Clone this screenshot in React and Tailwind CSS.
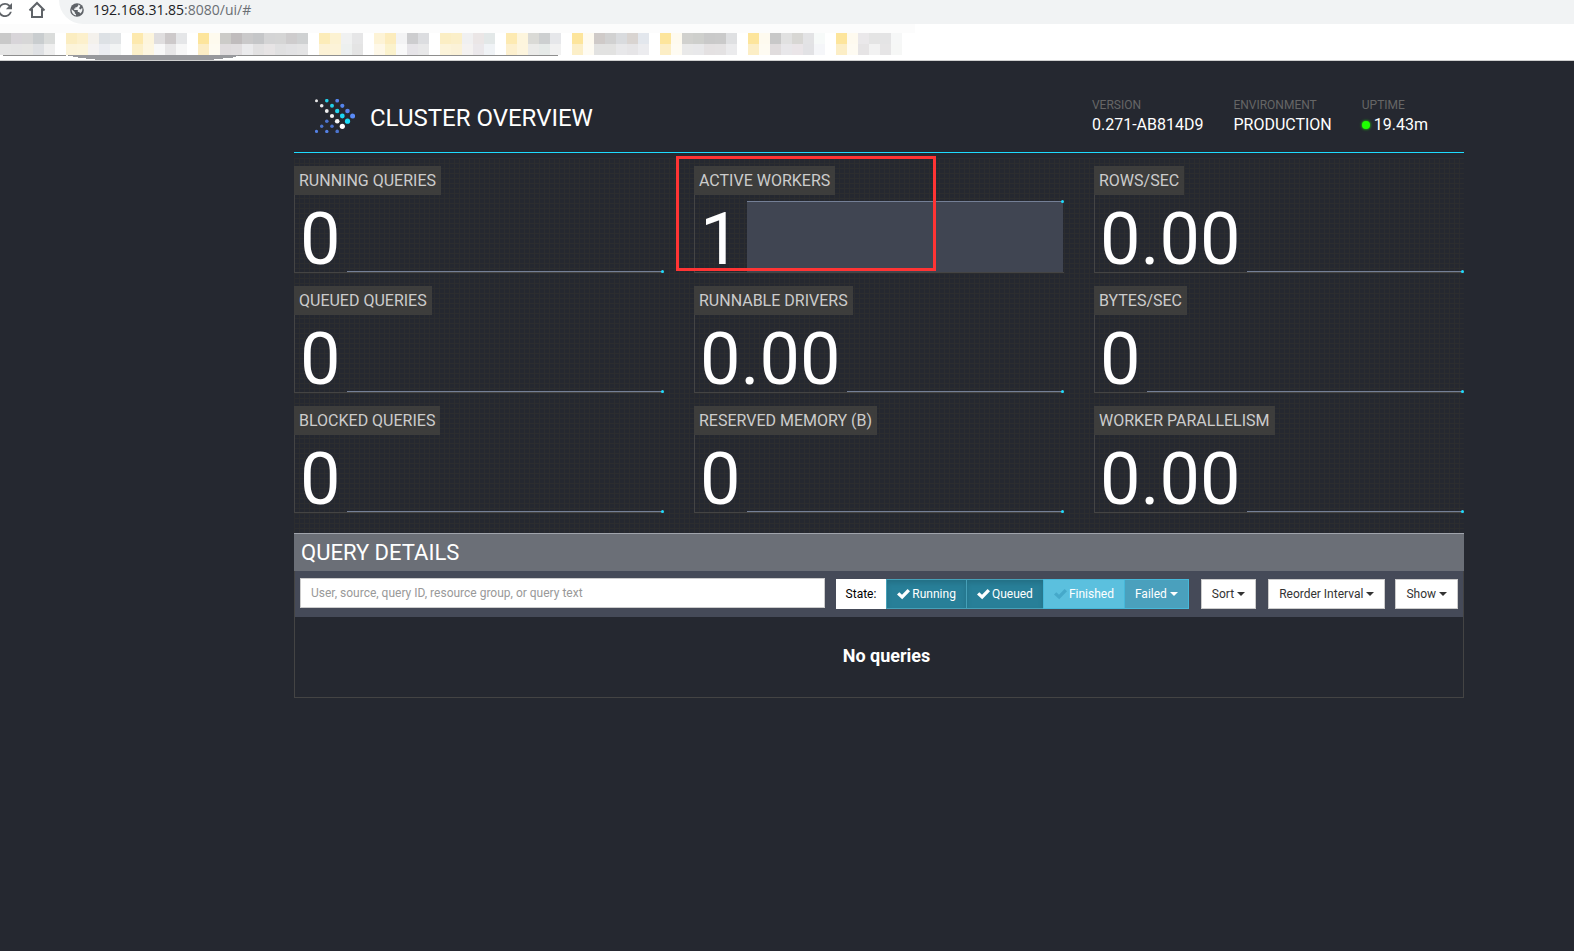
import React, { useState } from 'react';

const STATS = [
  { label: 'RUNNING QUERIES', value: '0' },
  { label: 'ACTIVE WORKERS', value: '1', full: true, highlight: true },
  { label: 'ROWS/SEC', value: '0.00' },
  { label: 'QUEUED QUERIES', value: '0' },
  { label: 'RUNNABLE DRIVERS', value: '0.00' },
  { label: 'BYTES/SEC', value: '0' },
  { label: 'BLOCKED QUERIES', value: '0' },
  { label: 'RESERVED MEMORY (B)', value: '0' },
  { label: 'WORKER PARALLELISM', value: '0.00' }
];

// Blurred bookmarks: top row and bottom row of 11px blocks
const BOOKMARKS = [
  [
    ['#c9c9c9', '#d8d5d9', '#d7d7d7', '#c9cdcf', '#dadcdb'],
    ['#e6e6e6', '#e5e5e5', '#e6e6e4', '#dfe1e4', '#efefef']
  ],
  [
    ['#fbedc1', '#fcf0cc', '#f4f1ec', '#dde1e5', '#e1e4e6'],
    ['#fcf4da', '#fcf5dc', '#f5f3f3', '#ebedf2', '#f2f4f4']
  ],
  [
    ['#fde9ae', '#fdf5dd', '#e0dedf', '#cdc9ca', '#e5e6e8'],
    ['#fcf0c9', '#fdf6e1', '#f8f8f8', '#e8e7e8', '#f7f7f7']
  ],
  [
    ['#fde59c', '#fefaee', '#cccbc8', '#c0bcbd', '#cac9ca', '#c5c6c8', '#d4d4d5', '#d5d5d5', '#cecccd', '#cfd1d2'],
    ['#fcedc5', '#fefbf1', '#e0dcde', '#e1dee0', '#ebebed', '#e2e1e2', '#e7e4e5', '#e0e0e1', '#e2e2e4', '#e4e4e5']
  ],
  [
    ['#fcecb9', '#fcf2d2', '#f0f1f1', '#e6e6e7'],
    ['#fcf2d6', '#fcf3d8', '#edf0ef', '#e4e4e4']
  ],
  [
    ['#fdf3d6', '#fcecbd', '#f3f3f4', '#cdcdcf', '#dcdde0'],
    ['#fef8e8', '#fbf2cc', '#f9f9f9', '#e6e4e8', '#e8e8e9']
  ],
  [
    ['#fbeec4', '#fbefc9', '#f0f0f1', '#ebe6e6', '#e3e8e8'],
    ['#fcf4da', '#fbf2d8', '#f4f2f1', '#ebe8eb', '#f0f3f6']
  ],
  [
    ['#fdeab2', '#fdf5dd', '#dadad6', '#cdcfd0', '#e6e7ea'],
    ['#fdf0ce', '#fdf5de', '#ebebe9', '#e6eae8', '#f1f1f1']
  ],
  [
    ['#fde59c', '#fefaef', '#cfcac8', '#d1d1d1', '#d9dbde', '#d9d4d1', '#e3e7ed'],
    ['#fcefc8', '#fefbf2', '#e2e2e1', '#e2e2e1', '#e8e8ea', '#e6e5e7', '#ececef']
  ],
  [
    ['#fde59c', '#fefaef', '#d1d1ce', '#cecfcc', '#c9c9c9', '#cacaca', '#dfe0e2'],
    ['#fceec6', '#fefbf2', '#e9e9e9', '#e8e8ea', '#e4e1e2', '#e4e2e3', '#ebebed']
  ],
  [
    ['#fde59c', '#fefaef', '#c8c8c8', '#e1e1e1', '#d8d7d4', '#e3e3e5', '#f7faf9'],
    ['#fceec6', '#fefbf2', '#e0dcdd', '#e8e7ea', '#eae5e8', '#e2e2e5', '#f5f6f9']
  ],
  [
    ['#fde59c', '#fefaef', '#eae8ea', '#e4e4e4', '#e4e4e5', '#f6f7f7'],
    ['#fceec6', '#fefbf2', '#e6e4e5', '#f2f2f2', '#e6e5e6', '#f6f7f6']
  ]
];

// [x, y, r, color]
const LOGO_DOTS = [
  [1.5, 1.7, 1.5, '#e8e8e8'], [11.8, 1.7, 1.8, '#22cfe8'], [22.2, 1.7, 1.9, '#5584ec'],
  [6.7, 6.8, 1.8, '#ececec'], [17, 6.8, 2, '#22cfe8'], [27.3, 6.8, 2.1, '#5584ec'],
  [11.8, 12, 1.9, '#efefef'], [22.2, 12, 2.2, '#1fd3ee'], [32.5, 12, 2.3, '#5584ec'],
  [17, 17, 2.1, '#f3f3f3'], [27.3, 17, 2.4, '#1cd7f3'], [37.6, 17, 2.5, '#5a8bf8'],
  [11.8, 22.2, 1.8, '#4c74cf'], [22.2, 22.2, 2.3, '#f8f8f8'], [32.5, 22.2, 2.6, '#18dcfa'],
  [6.7, 27.3, 1.7, '#4c74cf'], [17, 27.3, 1.8, '#4c74cf'], [27.3, 27.3, 2.6, '#ffffff'],
  [1.5, 32.4, 1.6, '#5480e4'], [11.8, 32.4, 1.7, '#5480e4'], [22.2, 32.4, 1.8, '#4c74cf']
];

function BrowserBar() {
  return (
    <div className="h-[61px] overflow-hidden border-b border-[#cfcfcf] bg-white">
      <div className="flex h-6 items-start text-[#5f6368]">
        <button type="button" aria-label="Reload" className="-ml-0.5 pt-[3px]">
          <svg width="14" height="14" viewBox="4 4 16 16" fill="currentColor">
            <path d="M17.65 6.35C16.2 4.9 14.21 4 12 4c-4.42 0-7.99 3.58-7.99 8s3.57 8 7.99 8c3.73 0 6.84-2.55 7.73-6h-2.08c-.82 2.33-3.04 4-5.65 4-3.31 0-6-2.69-6-6s2.69-6 6-6c1.66 0 3.14.69 4.22 1.78L13 11h7V4l-2.35 2.35z" />
          </svg>
        </button>
        <button type="button" aria-label="Home" className="ml-4 pt-px">
          <svg width="18" height="18" viewBox="0 0 18 18" fill="none" stroke="currentColor" strokeWidth="2">
            <path d="M1.5 9.5 9 2l7.5 7.5M4 8v8h10V8" />
          </svg>
        </button>
        <div className="ml-[13px] flex h-6 flex-1 items-start rounded-bl-full bg-[#f1f3f4] pl-[11px]">
          <svg className="mt-[3px] shrink-0" width="14" height="14" viewBox="0 0 14 14">
            <circle cx="7" cy="7" r="6.8" fill="#5f6368" />
            <path d="M1.6 6.2 4.8 9v1.2l1.2 1v1.4A5.6 5.6 0 0 1 1.6 6.2ZM8.2 1.6v1.2L6.800 4.200H5.400v1.400H4.200V7h3.600v2h1.400l1 1.600a5.600 5.600 0 0 0 2-5.800L10.600 6.400 9 5.200l1.400-2.400Z" fill="#f1f3f4" />
          </svg>
          <span className="ml-[9px] font-['Open_Sans',sans-serif] text-sm leading-5 text-[#202124]">
            192.168.31.85<span className="text-[#6b6f74]">:8080/ui/#</span>
          </span>
        </div>
      </div>
      <div className="h-[9px] w-[915px] bg-[#fcfcfc]" />
      <div className="flex gap-[11px]">
        {BOOKMARKS.map((rows, i) => (
          <div key={i} className="shrink-0">
            {rows.map((row, j) => (
              <div key={j} className="flex">
                {row.map((color, k) => (
                  <span key={k} className="h-[11px] w-[11px]" style={{ backgroundColor: color }} />
                ))}
              </div>
            ))}
          </div>
        ))}
      </div>
      <svg className="block" width="560" height="6" viewBox="0 0 560 6" shapeRendering="crispEdges">
        <path d="M3 .5H66M68 .5H558" stroke="#8e8e8e" />
        <path d="M68 0H238V1L231 3 215 4 209 6H103L92 4 80 3 70 1Z" fill="#98999d" />
      </svg>
    </div>
  );
}

function Logo() {
  return (
    <svg width="40" height="34" viewBox="0 0 40 34" role="img" aria-label="Logo">
      {LOGO_DOTS.map(([x, y, r, color]) => (
        <circle key={`${x}-${y}`} cx={x} cy={y} r={r} fill={color} />
      ))}
    </svg>
  );
}

function Info({ title, children }) {
  return (
    <div>
      <div className="text-xs leading-4 text-[#666666]">{title}</div>
      <div className="flex items-center text-base leading-6 text-white">{children}</div>
    </div>
  );
}

function Sparkline({ full }) {
  return (
    <div
      className={`relative mr-px ml-[7px] flex-1 border-t border-[#747f96] ${
        full ? 'h-[71px] bg-[#404552]' : 'h-px'
      }`}
    >
      <span className="absolute -top-0.5 -right-px h-[3px] w-[3px] rounded-full bg-[#1edcff]" />
    </div>
  );
}

function Stat({ label, value, full, highlight }) {
  return (
    <div className="relative flex h-[107px] flex-col items-start">
      <div className="bg-[#3d3d3c] px-[5px] text-base leading-[29px] text-[#cccccc]">{label}</div>
      <div className="flex w-full flex-1 items-end border-b border-l border-[#444444] pl-[5px]">
        <span className="text-7xl leading-16 text-white">{value}</span>
        <Sparkline full={full} />
      </div>
      {highlight && (
        <div className="absolute -top-2.5 -left-[18px] h-[115px] w-[260px] border-3 border-[#ff3434]" />
      )}
    </div>
  );
}

function Caret() {
  return <span className="ml-[3px] h-0 w-0 border-x-4 border-t-4 border-x-transparent border-t-current" />;
}

function CheckMark({ on }) {
  return (
    <svg
      className={on ? 'mr-0.5 text-white' : 'mr-0.5 text-[#46a9ca]'}
      width="13"
      height="12"
      viewBox="0 0 13 12"
      fill="currentColor"
    >
      <path d="M0 6.600 2.300 4.300 5 6.800 10.600 1 13 3.200 5.200 11.200Z" />
    </svg>
  );
}

function StateButton({ label, on, onClick }) {
  return (
    <button
      type="button"
      aria-pressed={on}
      onClick={onClick}
      className={`-mr-px flex h-[30px] items-center border px-2.5 text-white ${
        on
          ? 'border-[#46a0b8] bg-[#287f98] shadow-[inset_0_3px_5px_rgba(0,0,0,0.125)]'
          : 'border-[#46b8da] bg-[#5bc0de]'
      }`}
    >
      <CheckMark on={on} />
      {label}
    </button>
  );
}

function MenuButton({ children }) {
  return (
    <button type="button" className="flex h-[30px] items-center border border-[#cccccc] bg-white px-2.5 text-[#333333]">
      {children}
      <Caret />
    </button>
  );
}

export default function App() {
  const [search, setSearch] = useState('');
  const [states, setStates] = useState({ Running: true, Queued: true, Finished: false });

  const toggle = (name) => setStates({ ...states, [name]: !states[name] });

  return (
    <div className="min-h-screen bg-[#252830] font-[Roboto,sans-serif]">
      <BrowserBar />

      <main className="pr-[110px] pl-[294px]">
        {/* Header */}
        <header className="flex h-[92px] items-center justify-between border-b border-[#1edcff] pr-9 pl-[21px]">
          <div className="flex items-center gap-[15px] pt-[18px]">
            <Logo />
            <h1 className="pt-1 text-2xl text-white">CLUSTER OVERVIEW</h1>
          </div>
          <div className="flex gap-[30px] pt-5">
            <Info title="VERSION">0.271-AB814D9</Info>
            <Info title="ENVIRONMENT">PRODUCTION</Info>
            <Info title="UPTIME">
              <span className="mr-1 h-2 w-2 rounded-full bg-[#1eff00] shadow-[0_0_3px_#1eff00]" />
              19.43m
            </Info>
          </div>
        </header>

        {/* Stats */}
        <section className="mt-[5px] grid grid-cols-3 gap-x-[30px] gap-y-[13px] bg-[linear-gradient(#2c2d2f_1px,transparent_1px),linear-gradient(90deg,#2c2d2f_1px,transparent_1px)] bg-[size:5px_5px] pt-2 pb-5">
          {STATS.map((stat) => (
            <Stat key={stat.label} {...stat} />
          ))}
        </section>

        {/* Query list */}
        <h2 className="border-t border-[#a0a4ac] bg-[#6b6f77] pl-[7px] text-[22px] leading-[37px] text-white">
          QUERY DETAILS
        </h2>
        <section className="border-x border-b border-[#444444]">
          <div className="flex h-[46px] items-center bg-[#454a58] px-[5px] text-xs">
            <input
              type="text"
              aria-label="Search queries"
              value={search}
              onChange={(e) => setSearch(e.target.value)}
              placeholder="User, source, query ID, resource group, or query text"
              className="mb-0.5 h-[30px] min-w-0 flex-1 border border-[#cccccc] bg-white px-2.5 text-xs text-[#555555] placeholder:text-[#999999]"
            />
            <div className="ml-[11px] flex items-center">
              <span className="h-[30px] bg-white px-2.5 leading-[30px] text-black">State:</span>
              {Object.keys(states).map((name) => (
                <StateButton key={name} label={name} on={states[name]} onClick={() => toggle(name)} />
              ))}
              <button type="button" className="flex h-[30px] items-center border border-[#46b8da] bg-[#4aa0bd] px-2.5 text-white">
                Failed
                <Caret />
              </button>
            </div>
            <div className="ml-3 flex gap-3">
              <MenuButton>Sort</MenuButton>
              <MenuButton>Reorder Interval</MenuButton>
            </div>
            <div className="ml-2.5">
              <MenuButton>Show</MenuButton>
            </div>
          </div>
          <div className="flex h-20 items-center justify-center pb-0.5 pl-[15px]">
            <h4 className="text-lg font-bold text-white">No queries</h4>
          </div>
        </section>
      </main>
    </div>
  );
}
